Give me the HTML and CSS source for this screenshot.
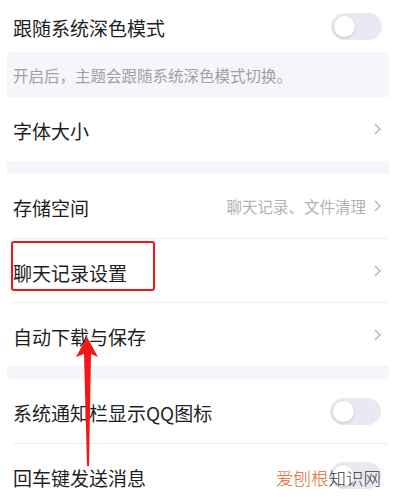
FILE: index.html
```html
<!DOCTYPE html>
<html lang="zh-Hans">
<head>
    <meta charset="UTF-8">
    <meta name="viewport" content="width=device-width, initial-scale=1.0">
    <title>设置</title>
    <link rel="stylesheet" href="styles.css">
</head>
<body>
    <div class="settings">
        <div class="row row-top">
            <span class="label">跟随系统深色模式</span>
            <span class="switch"><span class="knob"></span></span>
        </div>
        <div class="note">开启后，主题会跟随系统深色模式切换。</div>
        <div class="row">
            <span class="label">字体大小</span>
            <svg class="chevron" viewBox="0 0 7 12"><polyline points="1,1 6,6 1,11"/></svg>
        </div>

        <div class="gap"></div>

        <div class="row">
            <span class="label">存储空间</span>
            <span class="extra">聊天记录、文件清理
                <svg class="chevron" viewBox="0 0 7 12"><polyline points="1,1 6,6 1,11"/></svg>
            </span>
        </div>
        <div class="row line">
            <span class="label">聊天记录设置</span>
            <svg class="chevron" viewBox="0 0 7 12"><polyline points="1,1 6,6 1,11"/></svg>
        </div>
        <div class="row line">
            <span class="label">自动下载与保存</span>
            <svg class="chevron" viewBox="0 0 7 12"><polyline points="1,1 6,6 1,11"/></svg>
        </div>

        <div class="gap"></div>

        <div class="row">
            <span class="label">系统通知栏显示QQ图标</span>
            <span class="switch"><span class="knob"></span></span>
        </div>
        <div class="row line">
            <span class="label">回车键发送消息</span>
            <span class="switch"><span class="knob"></span></span>
        </div>
    </div>

    <!-- 标注 -->
    <div class="mark-box"></div>
    <svg class="mark-arrow" viewBox="0 0 409 497">
        <polygon points="87,337 98,357 91,354 89,466 87,466 84,354 76,357"/>
    </svg>
    <div class="watermark"><span class="wm-hot">爱刨根</span>知识网</div>
</body>
</html>
```

FILE: styles.css
```css
body {
    margin: 0;
    background: #fff;
    font-family: "Noto Sans CJK SC", "Noto Sans", sans-serif;
    color: #1e1e1e;
    overflow: hidden;
}

.settings {
    margin-left: 7px;
    width: 382px;
}

.row {
    display: flex;
    align-items: center;
    justify-content: space-between;
    height: 64px;
    margin-left: 6px;
    padding-right: 8px;
    box-sizing: border-box;
}

.row-top {
    height: 52px;
    padding-right: 7px;
}

.row.line {
    border-top: 1px solid #eeeef1;
}

.label {
    font-size: 19px;
    line-height: 1;
    padding-top: 3px;
}

.note {
    height: 45px;
    background: #f6f6fa;
    padding-left: 6px;
    display: flex;
    align-items: center;
    font-size: 15.5px;
    color: #a0a0a6;
}

.gap {
    height: 13px;
    background: #f6f6fa;
}

.extra {
    display: flex;
    align-items: center;
    gap: 8px;
    font-size: 15.5px;
    color: #b2b2b8;
}

.chevron {
    width: 7px;
    height: 12px;
    fill: none;
    stroke: #b5b5bb;
    stroke-width: 1.4;
}

.switch {
    position: relative;
    width: 51px;
    height: 27px;
    border-radius: 14px;
    background: #e9e9f3;
}

.knob {
    position: absolute;
    left: 3px;
    top: 3px;
    width: 21px;
    height: 21px;
    border-radius: 50%;
    background: #fff;
    box-shadow: 0 1px 3px rgba(0, 0, 0, 0.18);
}

.mark-box {
    position: absolute;
    left: 11px;
    top: 241px;
    width: 140px;
    height: 46px;
    border: 2.5px solid #f0161a;
    border-radius: 3px;
}

.mark-arrow {
    position: absolute;
    left: 0;
    top: 0;
    width: 409px;
    height: 497px;
    fill: #f5161a;
}

.watermark {
    position: absolute;
    left: 276px;
    top: 466px;
    font-size: 17.5px;
    line-height: 24px;
    color: #3c3c3c;
    font-weight: 300;
}

.wm-hot {
    color: #e0662a;
}
```
